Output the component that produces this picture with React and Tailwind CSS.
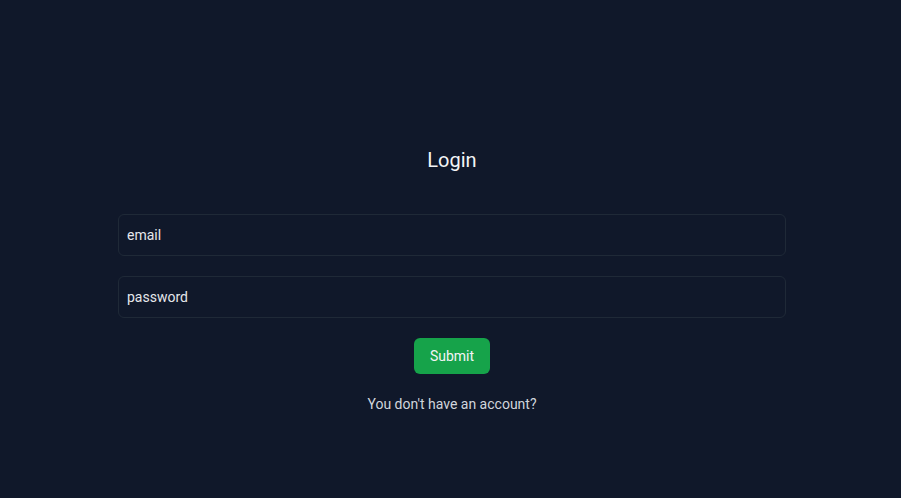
import React from 'react';

export default function App() {
  return (
    <div className="min-h-screen bg-[#10182a] font-['Roboto',sans-serif] pl-[3px]">
      <div className="w-[668px] mx-auto pt-[146px] flex flex-col items-center">
        <h1 className="text-xl leading-7 text-gray-100">Login</h1>
        <form className="w-full mt-10 flex flex-col items-center gap-5" onSubmit={(e) => e.preventDefault()}>
          <input
            type="text"
            placeholder="email"
            className="w-full h-[42px] px-2 bg-transparent border border-[#1f2937] rounded-md text-sm text-gray-200 placeholder:text-gray-200 outline-none"
          />
          <input
            type="password"
            placeholder="password"
            className="w-full h-[42px] px-2 bg-transparent border border-[#1f2937] rounded-md text-sm text-gray-200 placeholder:text-gray-200 outline-none"
          />
          <button type="submit" className="h-9 px-4 bg-[#16a34a] rounded-md text-sm text-gray-100">
            Submit
          </button>
          <p className="text-sm leading-5 text-gray-300">You don't have an account?</p>
        </form>
      </div>
    </div>
  );
}
